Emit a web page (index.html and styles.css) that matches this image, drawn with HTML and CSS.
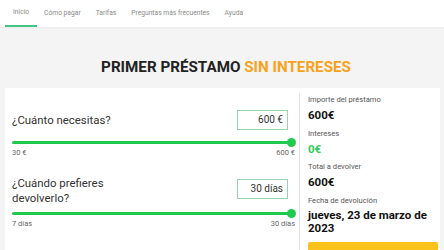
FILE: index.html
```html
<!DOCTYPE html>
<html lang="es">
<head>
<meta charset="utf-8">
<link rel="stylesheet" href="styles.css">
</head>
<body>
<nav class="nav">
  <a class="nav-item active">Inicio</a>
  <a class="nav-item">Cómo pagar</a>
  <a class="nav-item">Tarifas</a>
  <a class="nav-item">Preguntas más frecuentes</a>
  <a class="nav-item">Ayuda</a>
</nav>
<h1 class="title">PRIMER PRÉSTAMO <span class="accent">SIN INTERESES</span></h1>
<section class="card">
  <div class="calc">
    <div class="q-row first">
      <div class="q">¿Cuánto necesitas?</div>
      <div class="field">600 €</div>
    </div>
    <div class="slider"><div class="thumb"></div></div>
    <div class="range"><span>30 €</span><span>600 €</span></div>

    <div class="q-row second">
      <div class="q">¿Cuándo prefieres<br>devolverlo?</div>
      <div class="field">30 días</div>
    </div>
    <div class="slider s2"><div class="thumb"></div></div>
    <div class="range"><span>7 días</span><span>30 días</span></div>
  </div>
  <aside class="summary">
    <div class="s-label">Importe del préstamo</div>
    <div class="s-value">600€</div>
    <div class="s-label">Intereses</div>
    <div class="s-value green">0€</div>
    <div class="s-label">Total a devolver</div>
    <div class="s-value">600€</div>
    <div class="s-label">Fecha de devolución</div>
    <div class="s-value date">jueves, 23 de marzo de 2023</div>
    <div class="cta"></div>
  </aside>
</section>
</body>
</html>
```
FILE: styles.css
```css
html, body {
  margin: 0;
  padding: 0;
}
body {
  background: #f4f4f4;
  font-family: Roboto, "Liberation Sans", sans-serif;
  color: #333;
  height: 250px;
  overflow: hidden;
}
.nav {
  display: flex;
  height: 27px;
  background: #fff;
  padding-left: 5px;
  box-shadow: 0 1px 2px rgba(0,0,0,0.04);
}
.nav-item {
  display: block;
  padding: 0 7.5px;
  font-size: 6.7px;
  line-height: 27px;
  color: #8a8a8a;
  box-sizing: border-box;
}
.nav-item.active {
  padding: 0 8px;
  border-bottom: 2px solid #44c584;
  line-height: 25px;
  margin-right: -0.5px;
}
.title {
  margin: 0;
  height: 61px;
  padding: 19px 0 0 8px;
  box-sizing: border-box;
  font-size: 15.2px;
  font-weight: 700;
  color: #222;
  display: flex;
  align-items: center;
  justify-content: center;
}
.accent {
  color: #f7a21d;
  margin-left: 0.25em;
}
.card {
  display: flex;
  margin: 0 4px 0 5px;
  background: #fff;
  height: 200px;
}
.calc {
  width: 294px;
  padding: 0 4px 0 7px;
  box-sizing: border-box;
}
.q-row {
  display: flex;
  justify-content: space-between;
  padding-right: 7px;
}
.q-row.first {
  margin-top: 22px;
  height: 20px;
  align-items: center;
}
.q-row.second {
  margin-top: 17.5px;
  height: 30px;
  align-items: flex-start;
}
.q {
  font-size: 11.4px;
  line-height: 15px;
  color: #333;
}
.field {
  width: 51px;
  height: 20px;
  box-sizing: border-box;
  border: 1px solid #95d6ae;
  font-size: 10px;
  line-height: 18px;
  text-align: right;
  padding-right: 4px;
  color: #333;
}
.second .field {
  margin-top: 3.5px;
}
.slider {
  position: relative;
  height: 3px;
  background: #1fca4f;
  border-radius: 2px;
  margin-top: 10.5px;
  margin-right: 4px;
}
.slider.s2 {
  margin-top: 6px;
}
.thumb {
  position: absolute;
  right: -4.5px;
  top: -3px;
  width: 9px;
  height: 9px;
  border-radius: 50%;
  background: #1fca4f;
}
.range {
  display: flex;
  justify-content: space-between;
  font-size: 7.5px;
  line-height: 10px;
  color: #666;
  margin-top: 4.5px;
}
.summary {
  flex: 1;
  margin-top: 5px;
  border-left: 1px solid #e6e6e6;
  padding: 2px 2px 0 8px;
  box-sizing: border-box;
}
.s-label {
  font-size: 7.6px;
  line-height: 10px;
  color: #555;
  margin-bottom: 3px;
}
.s-value {
  font-size: 11.5px;
  line-height: 14px;
  font-weight: 700;
  color: #111;
  margin-bottom: 6.5px;
}
.s-value.green {
  color: #2fcb5c;
}
.s-value.date {
  line-height: 13px;
  margin-bottom: 7.5px;
}
.cta {
  height: 30px;
  background: #fbc21b;
  border-radius: 2px;
}
```
